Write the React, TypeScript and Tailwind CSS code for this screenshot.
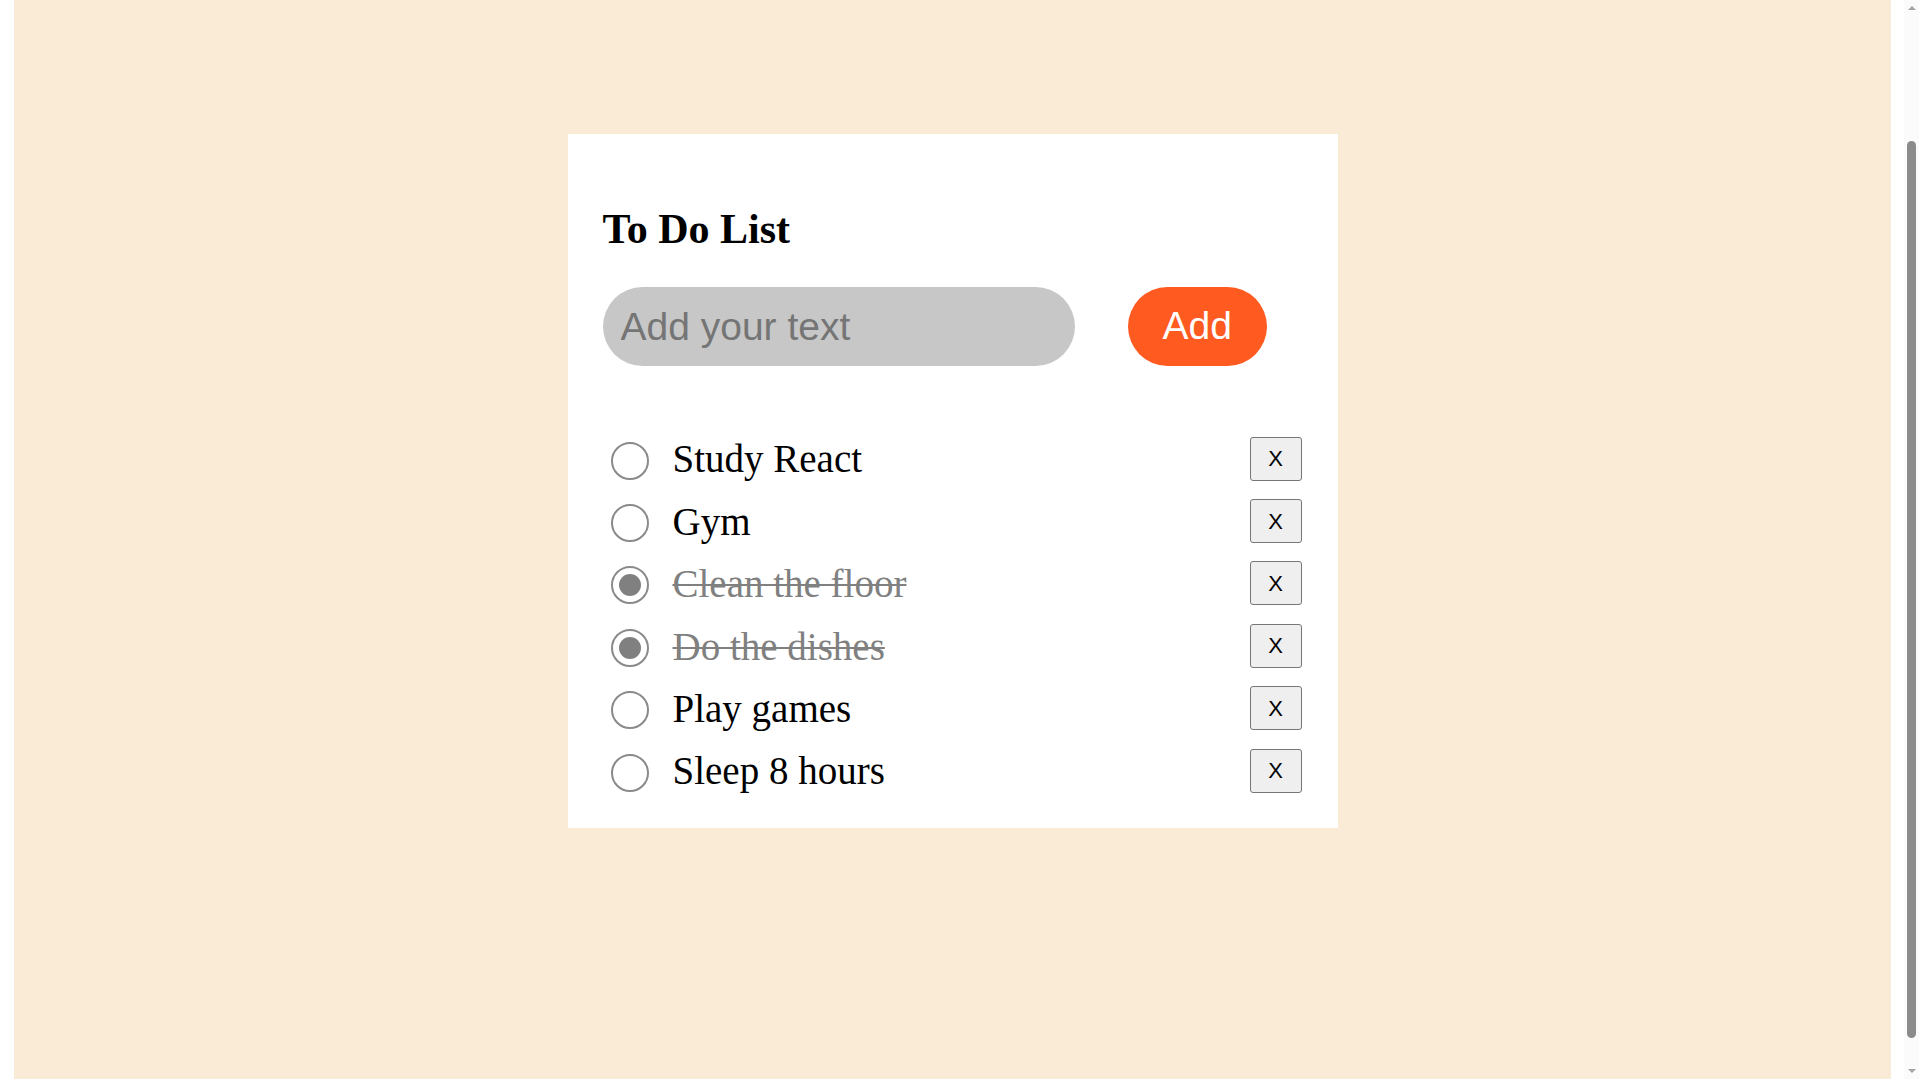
import { useState } from 'react'

type Task = {
  id: number
  text: string
  done: boolean
}

const initialTasks: Task[] = [
  { id: 1, text: 'Study React', done: false },
  { id: 2, text: 'Gym', done: false },
  { id: 3, text: 'Clean the floor', done: true },
  { id: 4, text: 'Do the dishes', done: true },
  { id: 5, text: 'Play games', done: false },
  { id: 6, text: 'Sleep 8 hours', done: false },
]

function FakeScrollbar() {
  return (
    <div className="flex w-[15px] flex-col items-center bg-[#fbfbfb]">
      <div className="mt-[6px] h-0 w-0 border-x-[4px] border-b-[4px] border-x-transparent border-b-[#a3a3a3]" />
      <div className="mt-[131px] h-[897px] w-[9px] rounded-full bg-[#8b8b8b]" />
      <div className="mt-auto mb-[6px] h-0 w-0 border-x-[4px] border-t-[4px] border-x-transparent border-t-[#a3a3a3]" />
    </div>
  )
}

export default function App() {
  const [tasks, setTasks] = useState<Task[]>(initialTasks)
  const [text, setText] = useState('')

  const addTask = () => {
    if (!text.trim()) return
    setTasks([...tasks, { id: Date.now(), text: text.trim(), done: false }])
    setText('')
  }

  const toggle = (id: number) => {
    setTasks(tasks.map((t) => (t.id === id ? { ...t, done: !t.done } : t)))
  }

  const remove = (id: number) => {
    setTasks(tasks.filter((t) => t.id !== id))
  }

  return (
    <div className="flex h-screen w-full overflow-hidden bg-white">
      <div className="flex-1 pr-[13px] pl-[14px]">
        <div className="flex h-full items-start justify-center bg-[#faebd7] pt-[134px]">
          <div className="w-[770px] bg-white pt-[72px] pr-[36px] pb-[26px] pl-[35px]">
            <h2 className="font-['Liberation_Serif',_serif] text-[42px] leading-[46px] font-bold text-black">
              To Do List
            </h2>

            <div className="mt-[35px] flex items-center gap-[53px]">
              <input
                type="text"
                placeholder="Add your text"
                value={text}
                onChange={(e) => setText(e.target.value)}
                className="h-[79px] w-[472px] rounded-full bg-[#c7c7c7] pl-[18px] font-['Liberation_Sans',_sans-serif] text-[39px] text-black outline-none placeholder:text-[#757575]"
              />
              <button
                onClick={addTask}
                className="h-[79px] rounded-full bg-[#ff5a1f] px-[35px] font-['Liberation_Sans',_sans-serif] text-[39px] text-white"
              >
                Add
              </button>
            </div>

            <ul className="mt-[61.5px] pl-[8px]">
              {tasks.map((task) => (
                <li key={task.id} className="flex h-[62.4px] items-center">
                  <button
                    onClick={() => toggle(task.id)}
                    className="mt-[4px] flex h-[38px] w-[38px] shrink-0 items-center justify-center rounded-full border-2 border-[#8a8a8a]"
                  >
                    {task.done && <span className="h-[22px] w-[22px] rounded-full bg-[#808080]" />}
                  </button>
                  <span
                    onClick={() => toggle(task.id)}
                    className={
                      task.done
                        ? "mt-[2px] ml-[24px] font-['Liberation_Serif',_serif] text-[39px] leading-normal text-[#808080] line-through decoration-2"
                        : "mt-[2px] ml-[24px] font-['Liberation_Serif',_serif] text-[39px] leading-normal text-black"
                    }
                  >
                    {task.text}
                  </span>
                  <button
                    onClick={() => remove(task.id)}
                    className="ml-auto h-[44px] w-[52px] rounded-[3px] border border-[#767676] bg-[#efefef] font-['Liberation_Sans',_sans-serif] text-[22px] text-black"
                  >
                    X
                  </button>
                </li>
              ))}
            </ul>
          </div>
        </div>
      </div>
      <FakeScrollbar />
    </div>
  )
}
